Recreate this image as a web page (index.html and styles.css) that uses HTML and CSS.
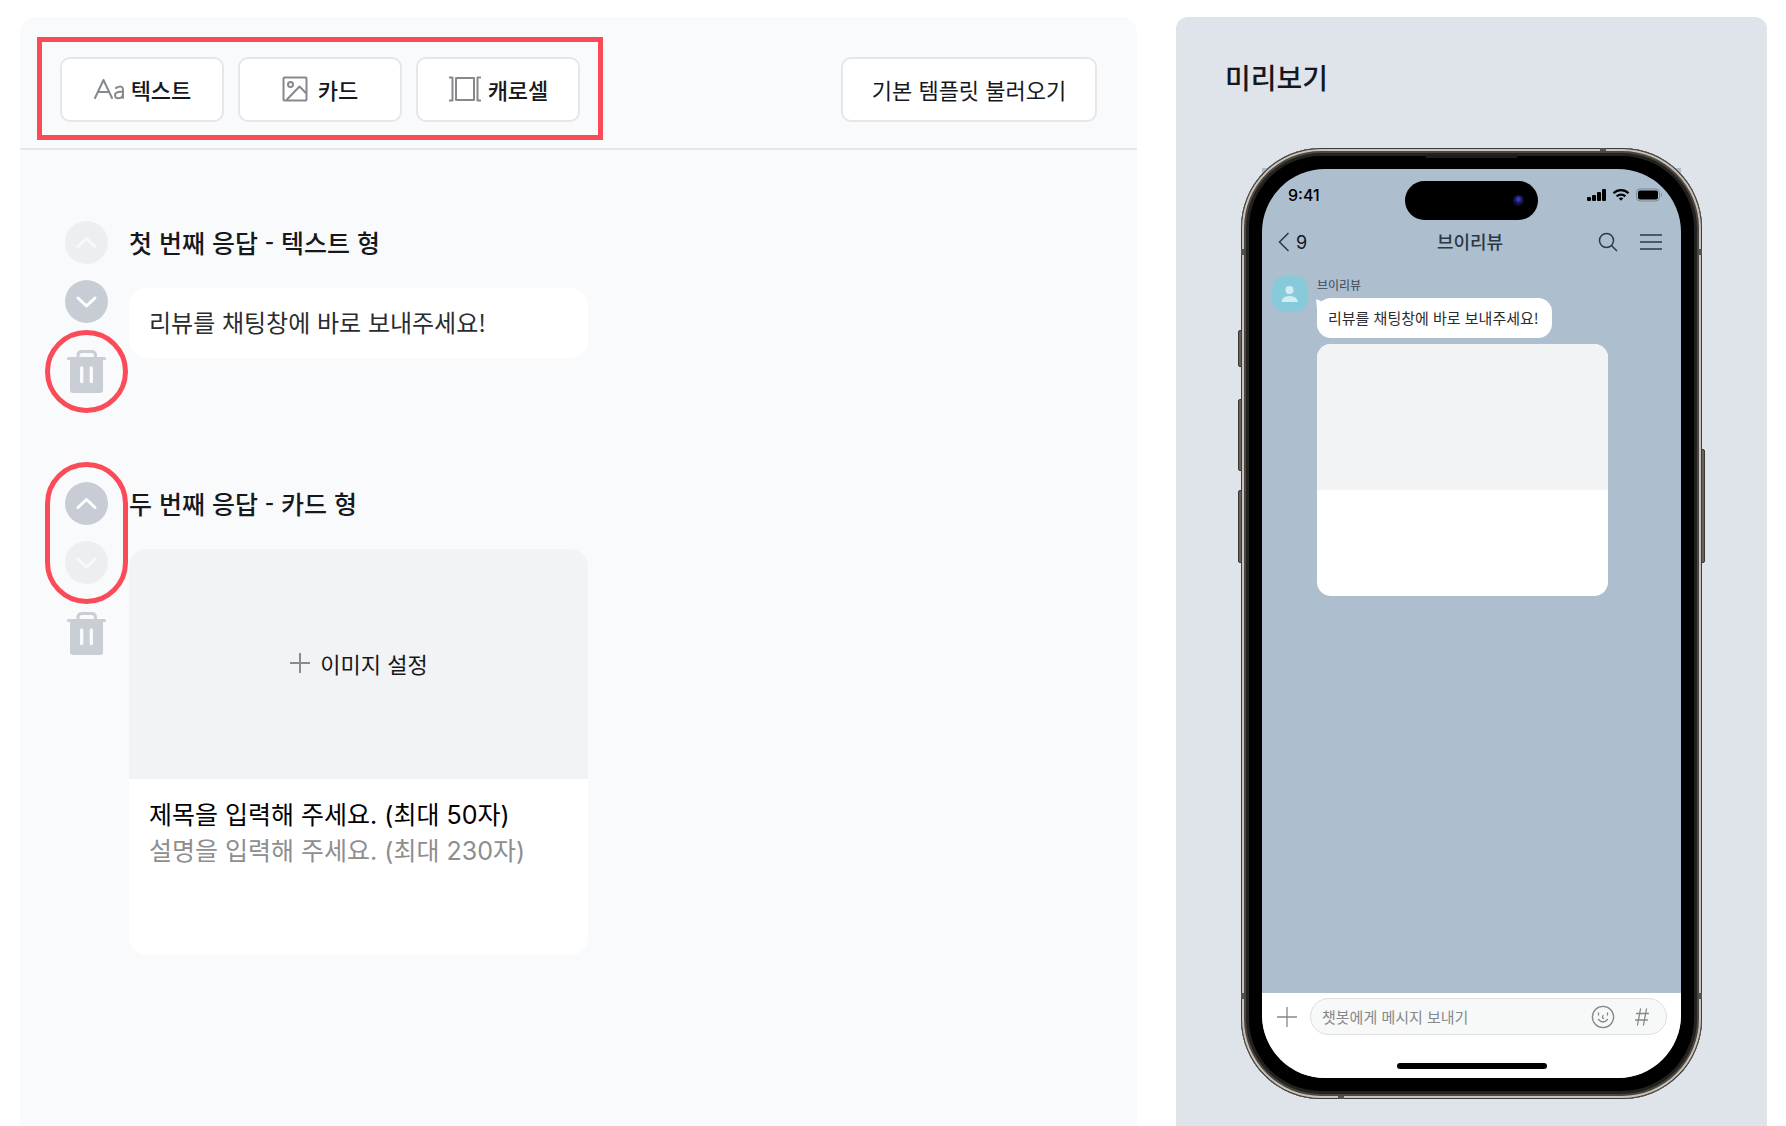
FILE: index.html
```html
<!DOCTYPE html>
<html lang="ko">
<head>
<meta charset="utf-8">
<meta name="viewport" content="width=device-width, initial-scale=1">
<title>챗봇 응답 편집</title>
<link rel="stylesheet" href="styles.css">
</head>
<body>
<svg class="sprite" aria-hidden="true">
  <symbol id="icon-up" viewBox="0 0 43 43"><path d="M13 25.5 21.5 17.500 30 25.500" fill="none" stroke="currentColor" stroke-width="3" stroke-linecap="round" stroke-linejoin="round"/></symbol>
  <symbol id="icon-down" viewBox="0 0 43 43"><path d="M13 18 21.500 26 30 18" fill="none" stroke="currentColor" stroke-width="3" stroke-linecap="round" stroke-linejoin="round"/></symbol>
  <symbol id="icon-trash" viewBox="0 0 43 43">
    <path d="M13 8V5.500Q13 1.500 17 1.500H26.500Q30.500 1.500 30.500 5.500V8" fill="none" stroke="currentColor" stroke-width="3"/>
    <path d="M3.500 8.500H39.500" stroke="currentColor" stroke-width="3" stroke-linecap="round"/>
    <path fill="currentColor" fill-rule="evenodd" d="M5 9H38V40Q38 43 35 43H8Q5 43 5 40ZM15 18V31.500A1.700 1.700 0 0 0 18.400 31.500V18A1.700 1.700 0 0 0 15 18ZM24.600 18V31.500A1.700 1.700 0 0 0 28 31.500V18A1.700 1.700 0 0 0 24.600 18Z"/>
  </symbol>
</svg>

<div class="page">
  <main class="editor">
    <header class="toolbar">
      <div class="types marked marked-box">
        <button class="btn" type="button">
          <svg width="32" height="24" viewBox="0 0 32 24" fill="none" stroke="#85898e" stroke-width="2" stroke-linecap="round" stroke-linejoin="round"><path d="M2 21 10.500 3 19 21M5 15H16"/><path d="M23 11Q29.500 7.500 30 12.500V21M30 14.500Q22 14.500 22 18 22 21.500 25.500 21.300 30 21 30 16.500"/></svg>
          텍스트
        </button>
        <button class="btn btn-wide-gap" type="button">
          <svg width="26" height="26" viewBox="0 0 26 26" fill="none" stroke="#85898e" stroke-width="2" stroke-linejoin="round"><rect x="1.500" y="1.500" width="23" height="23" rx="1"/><circle cx="8.500" cy="8.500" r="2.500"/><path d="M4.500 24 17.500 10.500 24.500 17.500"/></svg>
          카드
        </button>
        <button class="btn" type="button">
          <svg width="34" height="26" viewBox="0 0 34 26" fill="none" stroke="#85898e" stroke-width="2" stroke-linejoin="round"><rect x="8" y="2" width="18" height="22"/><path d="M1 1.500H4.500V24.500H1M33 1.500H29.500V24.500H33"/></svg>
          캐로셀
        </button>
      </div>
      <button class="btn btn-template" type="button">기본 템플릿 불러오기</button>
    </header>

    <section class="response">
      <div class="controls">
        <button class="round" type="button" aria-label="위로 이동" disabled><svg><use href="#icon-up"/></svg></button>
        <button class="round" type="button" aria-label="아래로 이동"><svg><use href="#icon-down"/></svg></button>
        <div class="marked marked-circle trash-slot">
          <button class="trash" type="button" aria-label="응답 삭제"><svg><use href="#icon-trash"/></svg></button>
        </div>
      </div>
      <div class="content">
        <h2>첫 번째 응답 - 텍스트 형</h2>
        <input class="message" type="text" aria-label="메시지 내용" value="리뷰를 채팅창에 바로 보내주세요!">
      </div>
    </section>

    <section class="response">
      <div class="controls">
        <div class="moves marked marked-pill">
          <button class="round" type="button" aria-label="위로 이동"><svg><use href="#icon-up"/></svg></button>
          <button class="round" type="button" aria-label="아래로 이동" disabled><svg><use href="#icon-down"/></svg></button>
        </div>
        <div class="trash-slot">
          <button class="trash" type="button" aria-label="응답 삭제"><svg><use href="#icon-trash"/></svg></button>
        </div>
      </div>
      <div class="content">
        <h2>두 번째 응답 - 카드 형</h2>
        <div class="card">
          <button class="card-image" type="button">
            <svg width="22" height="22" viewBox="0 0 22 22" stroke="#858d8f" stroke-width="2"><path d="M11 1V21M1 11H21"/></svg>
            이미지 설정
          </button>
          <div class="card-text">
            <input class="card-title" type="text" aria-label="제목" placeholder="제목을 입력해 주세요. (최대 50자)">
            <input class="card-desc" type="text" aria-label="설명" placeholder="설명을 입력해 주세요. (최대 230자)">
          </div>
        </div>
      </div>
    </section>
  </main>

  <aside class="preview">
    <h1>미리보기</h1>
    <div class="phone">
      <i class="key key-action"></i><i class="key key-volup"></i><i class="key key-voldown"></i><i class="key key-power"></i>
      <div class="frame">
        <i class="band band-top"></i><i class="band band-bottom"></i><i class="band band-upper"></i><i class="band band-lower"></i>
        <i class="speaker"></i>
        <div class="screen">
          <div class="island"><i class="lens"></i></div>
          <div class="status">
            <span>9:41</span>
            <svg width="76" height="14" viewBox="0 0 76 14">
              <rect x="0" y="9" width="4" height="4" rx="1"/><rect x="5" y="7" width="4" height="6" rx="1"/><rect x="10" y="4" width="4" height="9" rx="1"/><rect x="15" y="1" width="4" height="12" rx="1"/>
              <g fill="none" stroke="#000" stroke-width="2.300"><path d="M26.500 5.200A10.500 10.500 0 0 1 41.500 5.200"/><path d="M29.700 8.400A6 6 0 0 1 38.300 8.400"/></g><path d="M31.700 10.300Q34 8.600 36.300 10.300L34 12.800Z"/>
              <rect x="49.500" y="1" width="23" height="12" rx="3.500" fill="none" stroke="#7d8994"/><rect x="51" y="2.500" width="20" height="9" rx="2"/><path d="M74 5Q76 7 74 9Z" fill="#7d8994"/>
            </svg>
          </div>
          <nav class="chat-nav">
            <button class="back" type="button"><svg width="12" height="20" viewBox="0 0 12 20"><path d="M10.500 1 1.500 10 10.500 19"/></svg>9</button>
            <strong>브이리뷰</strong>
            <div class="nav-icons">
              <button type="button" aria-label="검색"><svg width="20" height="20" viewBox="0 0 20 20"><circle cx="8.500" cy="8.500" r="7"/><path d="M13.500 13.500 19 19"/></svg></button>
              <button type="button" aria-label="메뉴"><svg width="22" height="20" viewBox="0 0 22 20"><path d="M0 3H22M0 10H22M0 17H22"/></svg></button>
            </div>
          </nav>
          <div class="chat">
            <svg class="avatar" width="36" height="36" viewBox="0 0 36 36"><circle cx="17.500" cy="14" r="4" fill="#d3ecf4"/><path d="M9.500 26Q10 20 17.500 20T26 26Z" fill="#d3ecf4"/></svg>
            <div class="messages">
              <span class="sender">브이리뷰</span>
              <p class="bubble">리뷰를 채팅창에 바로 보내주세요!</p>
              <div class="chat-card"><div class="chat-card-image"></div></div>
            </div>
          </div>
          <div class="composer">
            <div class="composer-row">
              <button type="button" aria-label="첨부"><svg width="20" height="20" viewBox="0 0 20 20" stroke-width="1.300"><path d="M10 0.500V19.500M0.500 10H19.500"/></svg></button>
              <div class="entry">
                <input type="text" aria-label="메시지" placeholder="챗봇에게 메시지 보내기">
                <button type="button" aria-label="이모티콘"><svg width="24" height="24" viewBox="0 0 24 24" stroke-width="1.300"><circle cx="12" cy="12" r="10.600"/><path d="M7.500 8V10M16.500 8V10M12.200 10.500Q10.500 13 12.500 13.300M7.500 14.500Q12 19.500 16.500 14.500"/></svg></button>
                <button type="button" aria-label="태그"><svg width="14" height="18" viewBox="0 0 14 18" stroke-width="1.300"><path d="M5.500 1 2.500 17M11.500 1 8.500 17M1.500 5.500H13.500M0.500 12H12.500"/></svg></button>
              </div>
            </div>
            <i class="home"></i>
          </div>
        </div>
      </div>
    </div>
  </aside>
</div>
</body>
</html>
```
FILE: styles.css
```css
* { box-sizing: border-box; }

body {
  margin: 0;
  background: #fff;
  color: #17181b;
  font-family: "Noto Sans CJK KR", sans-serif;
}

button, input {
  margin: 0;
  padding: 0;
  border: 0;
  background: none;
  color: inherit;
  font: inherit;
}

h1, h2, p { margin: 0; }
svg { display: block; flex: none; }
.sprite { position: absolute; width: 0; height: 0; }

.page {
  display: grid;
  grid-template-columns: minmax(0, 1117fr) minmax(500px, 591fr);
  gap: 39px;
  min-height: 100vh;
  padding: 17px 19px 0 20px;
}

/* Response editor */
.editor {
  border-radius: 16px 16px 0 0;
  background: #f8fafc;
}

.toolbar {
  display: flex;
  justify-content: space-between;
  align-items: center;
  height: 133px;
  padding: 26px 40px 12px 40px;
  border-bottom: 2px solid #e4e7eb;
}

.types { display: flex; gap: 14px; }

.btn {
  display: flex;
  justify-content: center;
  align-items: center;
  gap: 6px;
  width: 164px;
  height: 65px;
  padding-bottom: 2px;
  border: 2px solid #e5e7ea;
  border-radius: 10px;
  background: #fff;
  font-size: 22px;
  font-weight: 500;
}
.btn-wide-gap { gap: 10px; }
.btn-template { width: 256px; font-weight: 400; }

/* Red highlight outlines drawn over the controls */
.marked { position: relative; }
.marked::after {
  content: "";
  position: absolute;
  border: 5px solid #fb4b59;
  pointer-events: none;
}
.marked-box::after { inset: -20px -23px -18px -23px; }
.marked-circle::after { inset: -20px; border-radius: 50%; }
.marked-pill::after { inset: -20px; border-radius: 42px; }

.response {
  display: grid;
  grid-template-columns: 43px minmax(0, 459px);
  gap: 21px;
  padding: 71px 45px 0;
}
.response + .response { padding-top: 89px; }

.controls, .moves {
  display: flex;
  flex-direction: column;
  gap: 16px;
}

.controls svg { width: 43px; height: 43px; }

.round {
  width: 43px;
  height: 43px;
  border-radius: 50%;
  background: #c8cdd5;
  color: #fff;
}
.round:disabled { background: #ebefef; color: #f8fafa; }

.trash-slot { margin-top: 11px; }
.trash { display: block; color: #c9ced4; }
.response + .response .trash-slot { margin-top: 12px; }

.content h2 {
  margin-bottom: 25px;
  font-size: 25px;
  font-weight: 500;
  line-height: 42px;
}

.message {
  display: block;
  width: 100%;
  height: 70px;
  padding: 0 20px 4px;
  border-radius: 18px;
  background: #fff;
  color: #2b2c2e;
  font-size: 24px;
}

.card {
  overflow: hidden;
  border-radius: 18px;
  background: #fff;
}

.card-image {
  display: flex;
  justify-content: center;
  align-items: center;
  gap: 9px;
  width: 100%;
  height: 230px;
  padding-bottom: 2px;
  background: #f2f3f5;
  font-size: 22px;
}

.card-text {
  min-height: 176px;
  padding: 18px 20px;
  font-family: Inter, "Noto Sans CJK KR", sans-serif;
}
.card-text input {
  display: block;
  width: 100%;
  height: 36px;
  font-size: 25px;
}
.card-text input::placeholder { opacity: 1; }
.card-title::placeholder { color: #000; }
.card-desc::placeholder { color: #8e8e8e; }

/* Preview */
.preview {
  border-radius: 12px 12px 0 0;
  background: #dfe4eb;
}

.preview h1 {
  padding: 39px 49px 50px;
  font-size: 28px;
  font-weight: 500;
  line-height: 42px;
}

.phone {
  position: relative;
  z-index: 0;
  width: 461px;
  margin: 0 auto;
}
.phone::before {
  content: "";
  position: absolute;
  z-index: -1;
  inset: 20px 21px 50%;
  background: #a9bfcb;
}

.key {
  position: absolute;
  z-index: -1;
  width: 6px;
  border: 1px solid #3a3835;
  border-radius: 2px;
  background: #65625e;
}
.key-action { left: -3px; top: 182px; height: 37px; }
.key-volup { left: -3px; top: 251px; height: 72px; }
.key-voldown { left: -3px; top: 342px; height: 73px; }
.key-power { right: -3px; top: 301px; height: 114px; }

.frame {
  position: relative;
  padding: 21px;
  border-radius: 80px;
  background: #000;
  box-shadow: inset 0 0 0 1px #3f3b38, inset 0 0 0 3px #c9c2ba, inset 0 0 0 5px #4a4743, inset 0 0 0 8px #24221f;
}

.band { position: absolute; background: #55524f; }
.band-top { top: 0; right: 96px; width: 6px; height: 3px; }
.band-bottom { bottom: 0; left: 97px; width: 6px; height: 3px; }
.band-upper, .band-lower {
  left: 0;
  right: 0;
  height: 6px;
  border: solid #55524f;
  border-width: 0 3px;
  background: none;
}
.band-upper { top: 101px; }
.band-lower { bottom: 100px; }

.speaker {
  position: absolute;
  top: 7px;
  left: 185px;
  width: 91px;
  height: 3px;
  background: #1d1d1d;
}

.screen {
  position: relative;
  display: flex;
  flex-direction: column;
  height: 909px;
  overflow: hidden;
  border-radius: 63px;
  background: #adbece;
}

.island {
  position: absolute;
  top: 12px;
  left: 143px;
  width: 133px;
  height: 39px;
  border-radius: 20px;
  background: #000;
}
.lens {
  position: absolute;
  top: 14px;
  right: 14px;
  width: 11px;
  height: 11px;
  border-radius: 50%;
  background: radial-gradient(circle at 50% 40%, #3a3ab0 0 15%, #15155a 40%, #0a0a24 75%);
}

.status {
  display: flex;
  justify-content: space-between;
  align-items: center;
  height: 52px;
  padding: 0 18px 0 26px;
  color: #000;
  font-family: Inter, sans-serif;
  font-size: 16px;
  font-weight: 500;
}

.chat-nav {
  display: grid;
  grid-template-columns: 1fr auto 1fr;
  align-items: center;
  height: 42px;
  padding: 0 19px 0 16px;
  color: #2c3844;
}
.chat-nav svg { fill: none; stroke: #2c3844; stroke-width: 1.5; }
.chat-nav strong {
  padding-bottom: 2px;
  font-size: 18px;
  font-weight: 500;
  line-height: 24px;
}
.back {
  display: flex;
  align-items: center;
  gap: 6px;
  color: #11161b;
  font-family: Inter, sans-serif;
  font-size: 18px;
}
.nav-icons {
  display: flex;
  justify-content: flex-end;
  gap: 22px;
}

.chat {
  display: flex;
  flex: 1;
  gap: 9px;
  padding: 13px 10px;
}
.avatar {
  border-radius: 13px;
  background: #87cbdb;
}
.sender {
  display: block;
  height: 22px;
  color: #3c4854;
  font-size: 12px;
  line-height: 18px;
}
.bubble {
  position: relative;
  width: fit-content;
  padding: 0 13px 0 11px;
  border-radius: 14px;
  background: #fff;
  color: #2b2c2e;
  font-size: 15px;
  line-height: 40px;
}
.bubble::before {
  content: "";
  position: absolute;
  top: 1px;
  left: -1px;
  width: 12px;
  height: 12px;
  background: #fff;
  clip-path: polygon(0 0, 50% 20%, 100% 100%, 10% 100%);
}
.chat-card {
  width: 291px;
  height: 252px;
  margin-top: 6px;
  overflow: hidden;
  border-radius: 14px;
  background: #fff;
}
.chat-card-image { height: 146px; background: #f2f3f5; }

.composer {
  display: flex;
  flex-direction: column;
  justify-content: space-between;
  align-items: center;
  height: 85px;
  padding: 5px 14px 9px 15px;
  background: #fff;
}
.composer svg { fill: none; stroke: #85888b; stroke-linecap: round; }
.composer-row {
  display: flex;
  align-items: center;
  gap: 13px;
  width: 100%;
}
.entry {
  display: flex;
  flex: 1;
  align-items: center;
  height: 37px;
  padding: 0 17px 0 11px;
  border: 1px solid #dcdedf;
  border-radius: 19px;
  background: #f7f8f8;
}
.entry input {
  flex: 1;
  min-width: 0;
  font-size: 15px;
}
.entry input::placeholder { color: #85888b; opacity: 1; }
.entry button + button { margin-left: 20px; }
.home {
  width: 150px;
  height: 6px;
  border-radius: 3px;
  background: #000;
}
```
